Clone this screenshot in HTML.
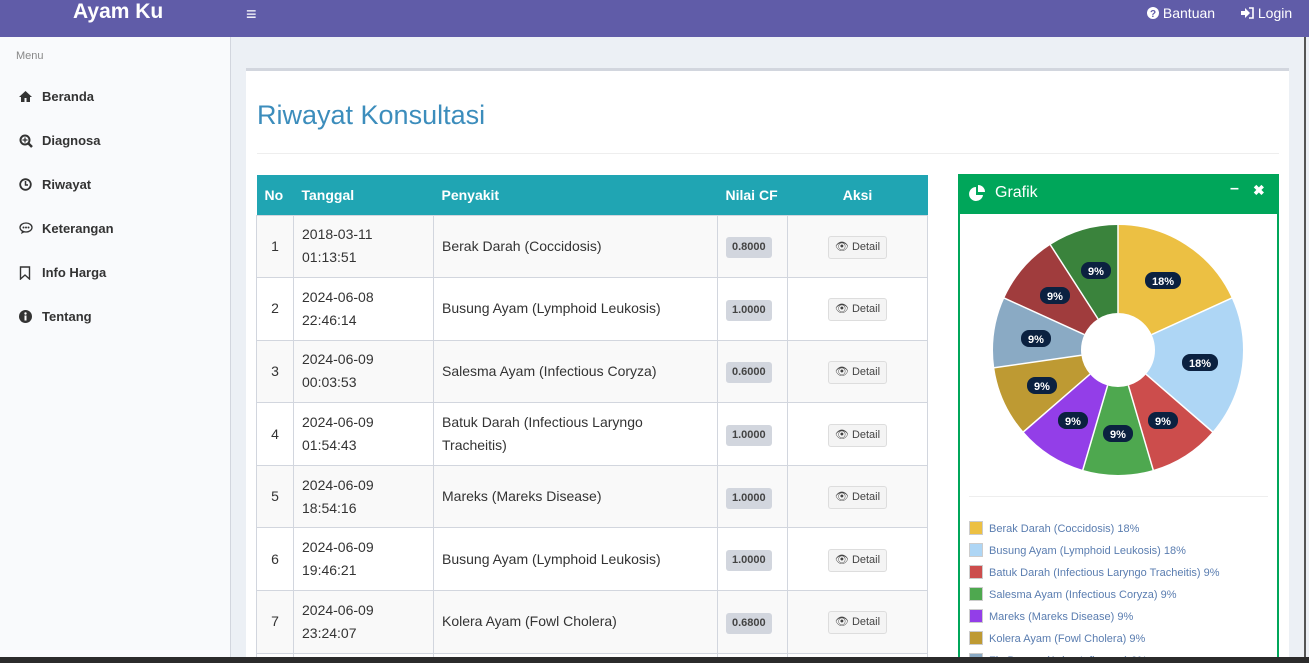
<!DOCTYPE html>
<html><head><meta charset="utf-8"><style>
*{box-sizing:border-box;margin:0;padding:0}
html,body{width:1309px;height:663px;overflow:hidden}
body{background:#ecf0f5;font-family:"Liberation Sans",sans-serif;color:#333;position:relative}
.nav{position:absolute;left:0;top:0;width:1309px;height:37px;background:#605ca8;color:#fff}
.logo{position:absolute;left:73px;top:0px;font-size:21px;font-weight:bold}
.burger{position:absolute;left:246px;top:4px;font-size:18px;font-weight:bold}
.nr{position:absolute;top:5px;font-size:14px}
.side{position:absolute;left:0;top:37px;width:231px;height:626px;background:#f9fafc;border-right:1px solid #d2d6de}
.side .m{position:absolute;left:16px;top:13px;font-size:11px;color:#888}
.side .it{position:absolute;left:19px;font-size:13px;font-weight:bold;color:#333}
.side .it svg{position:absolute;left:0;top:1px}
.side .it b{margin-left:23px}
.box{position:absolute;left:246px;top:68px;width:1043px;height:595px;background:#fff;border-top:3px solid #d2d6de}
h1{position:absolute;left:257px;top:100px;font-size:27px;font-weight:normal;color:#3c8dbc}
.hr{position:absolute;left:257px;top:153px;width:1022px;height:1px;background:#eee}
.tw{position:absolute;left:256px;top:175px;width:672px;height:482px;overflow:hidden}
table{border-collapse:collapse;width:672px;font-size:14px}
th{background:#20a5b3;color:#fff;height:40px;text-align:left;padding-left:8px;font-size:14px}
td{border:1px solid #d2d6de;height:62.6px;padding:0 8px;line-height:23px}
tr:nth-child(even) td{background:#f9f9f9}
.b{display:inline-block;background:#d2d6de;font-size:11px;font-weight:bold;padding:4px 6px;line-height:13px;border-radius:3px;color:#444}
.d{display:inline-block;border:1px solid #ddd;background:#f4f4f4;border-radius:3px;font-size:11px;padding:4px 6px;line-height:13px;color:#444}
.g{position:absolute;left:958px;top:174px;width:321px;height:489px;border:2px solid #00a65a;border-top:none;border-bottom:none;background:#fff;overflow:hidden}
.gh{position:absolute;left:958px;top:174px;width:321px;height:40px;background:#00a65a;color:#fff;font-size:16px;padding:10px 0 0 37px}
.lg{position:absolute;left:969px;font-size:11px;color:#5a7db0}
.lg span{display:inline-block;width:14px;height:14px;border:1px solid #ccc;vertical-align:-3px;margin-right:6px}
.lb{font:bold 11px "Liberation Sans",sans-serif;fill:#fff}
</style></head><body>
<div class="nav"><div class="logo">Ayam Ku</div><div class="burger">&#8801;</div>
<div class="nr" style="left:1147px"><svg width="12" height="12" viewBox="0 0 12 12" style="vertical-align:-1px"><circle cx="6" cy="6" r="6" fill="#fff"/><text x="6" y="10" text-anchor="middle" font-size="10" font-weight="bold" fill="#605ca8" font-family="Liberation Sans">?</text></svg> Bantuan</div>
<div class="nr" style="left:1241px"><svg width="13" height="12" viewBox="0 0 13 12" style="vertical-align:-1px"><path d="M0 4h4V1l5 5-5 5V8H0z" fill="#fff"/><path d="M8 1h4v10H8" fill="none" stroke="#fff" stroke-width="1.6"/></svg> Login</div></div>
<div class="side"><div class="m">Menu</div>
<div class="it" style="top:52px"><svg width="13" height="12"><path d="M6.5 1L0 7h2v5h3.5V8h2v4H11V7h2z" fill="#333"/></svg><b>Beranda</b></div>
<div class="it" style="top:96px"><svg width="14" height="14"><circle cx="6" cy="6" r="4.5" fill="none" stroke="#333" stroke-width="2"/><path d="M9 9l4 4" stroke="#333" stroke-width="2.5"/><path d="M6 3.5v5M3.5 6h5" stroke="#333" stroke-width="1.3"/></svg><b>Diagnosa</b></div>
<div class="it" style="top:140px"><svg width="13" height="13"><circle cx="6.5" cy="6.5" r="5.3" fill="none" stroke="#333" stroke-width="1.8"/><path d="M6.5 3v4H9" fill="none" stroke="#333" stroke-width="1.5"/></svg><b>Riwayat</b></div>
<div class="it" style="top:184px"><svg width="14" height="13"><ellipse cx="7" cy="5.5" rx="6" ry="4.5" fill="none" stroke="#333" stroke-width="1.3"/><path d="M3 9l-1 3 4-2" fill="#333"/><circle cx="4.5" cy="5.5" r="1" fill="#333"/><circle cx="7" cy="5.5" r="1" fill="#333"/><circle cx="9.5" cy="5.5" r="1" fill="#333"/></svg><b>Keterangan</b></div>
<div class="it" style="top:228px"><svg width="12" height="14"><path d="M1.5 1h9v12l-4.5-4-4.5 4z" fill="none" stroke="#333" stroke-width="1.4"/></svg><b>Info Harga</b></div>
<div class="it" style="top:272px"><svg width="13" height="13"><circle cx="6.5" cy="6.5" r="6.5" fill="#333"/><rect x="5.5" y="5.5" width="2" height="5" fill="#fff"/><circle cx="6.5" cy="3.5" r="1.2" fill="#fff"/></svg><b>Tentang</b></div></div>
<div class="box"></div>
<h1>Riwayat Konsultasi</h1><div class="hr"></div>
<div class="tw"><table>
<tr><th style="width:37px">No</th><th style="width:140px">Tanggal</th><th style="width:284px">Penyakit</th><th style="width:70px">Nilai CF</th><th style="text-align:center;padding:0">Aksi</th></tr>
<tr><td style="text-align:center">1</td><td>2018-03-11<br>01:13:51</td><td>Berak Darah (Coccidosis)</td><td><span class="b">0.8000</span></td><td style="text-align:center"><span class="d">&#128065;&#xFE0E; Detail</span></td></tr>
<tr><td style="text-align:center">2</td><td>2024-06-08<br>22:46:14</td><td>Busung Ayam (Lymphoid Leukosis)</td><td><span class="b">1.0000</span></td><td style="text-align:center"><span class="d">&#128065;&#xFE0E; Detail</span></td></tr>
<tr><td style="text-align:center">3</td><td>2024-06-09<br>00:03:53</td><td>Salesma Ayam (Infectious Coryza)</td><td><span class="b">0.6000</span></td><td style="text-align:center"><span class="d">&#128065;&#xFE0E; Detail</span></td></tr>
<tr><td style="text-align:center">4</td><td>2024-06-09<br>01:54:43</td><td>Batuk Darah (Infectious Laryngo Tracheitis)</td><td><span class="b">1.0000</span></td><td style="text-align:center"><span class="d">&#128065;&#xFE0E; Detail</span></td></tr>
<tr><td style="text-align:center">5</td><td>2024-06-09<br>18:54:16</td><td>Mareks (Mareks Disease)</td><td><span class="b">1.0000</span></td><td style="text-align:center"><span class="d">&#128065;&#xFE0E; Detail</span></td></tr>
<tr><td style="text-align:center">6</td><td>2024-06-09<br>19:46:21</td><td>Busung Ayam (Lymphoid Leukosis)</td><td><span class="b">1.0000</span></td><td style="text-align:center"><span class="d">&#128065;&#xFE0E; Detail</span></td></tr>
<tr><td style="text-align:center">7</td><td>2024-06-09<br>23:24:07</td><td>Kolera Ayam (Fowl Cholera)</td><td><span class="b">0.6800</span></td><td style="text-align:center"><span class="d">&#128065;&#xFE0E; Detail</span></td></tr>
<tr><td></td><td></td><td></td><td></td><td></td></tr>
</table></div>
<div class="g"></div>
<div class="gh">Grafik<svg style="position:absolute;left:10px;top:11px" width="18" height="18" viewBox="0 0 18 18"><path d="M8 2A7 7 0 1 0 15 10H8z" fill="#fff"/><path d="M10 0A7 7 0 0 1 17 7H10z" fill="#fff"/></svg><span style="position:absolute;left:272px;top:6px;font-weight:bold">&#8211;</span><span style="position:absolute;left:295px;top:8px;font-size:14px;font-weight:bold">&#10006;</span></div>
<svg style="position:absolute;left:993px;top:225px" width="250" height="250" viewBox="-125 -125 250 250">
<g transform="rotate(-90)" fill="none" stroke-width="88">
<circle r="81" stroke="#ecc043" stroke-dasharray="92.54 600" stroke-dashoffset="0"/>
<circle r="81" stroke="#aed6f5" stroke-dasharray="92.54 600" stroke-dashoffset="-92.54"/>
<circle r="81" stroke="#cc4d4c" stroke-dasharray="46.27 600" stroke-dashoffset="-185.08"/>
<circle r="81" stroke="#4ea84f" stroke-dasharray="46.27 600" stroke-dashoffset="-231.35"/>
<circle r="81" stroke="#933ee8" stroke-dasharray="46.27 600" stroke-dashoffset="-277.62"/>
<circle r="81" stroke="#be9a33" stroke-dasharray="46.27 600" stroke-dashoffset="-323.89"/>
<circle r="81" stroke="#8aaac4" stroke-dasharray="46.27 600" stroke-dashoffset="-370.16"/>
<circle r="81" stroke="#a03c3d" stroke-dasharray="46.27 600" stroke-dashoffset="-416.43"/>
<circle r="81" stroke="#3a833c" stroke-dasharray="46.2 600" stroke-dashoffset="-462.7"/>
</g>
<g stroke="#fff" stroke-width="1.5">
<line x1="0" y1="-37" x2="0" y2="-126"/>
<line x1="33.7" y1="-15.4" x2="114.6" y2="-52.3"/>
<line x1="28" y1="24.2" x2="95.3" y2="82.5"/>
<line x1="10.4" y1="35.5" x2="35.5" y2="121"/>
<line x1="-10.4" y1="35.5" x2="-35.5" y2="121"/>
<line x1="-28" y1="24.2" x2="-95.3" y2="82.5"/>
<line x1="-36.6" y1="5.3" x2="-124.7" y2="17.9"/>
<line x1="-33.7" y1="-15.4" x2="-114.6" y2="-52.3"/>
<line x1="-20" y1="-31.1" x2="-68.2" y2="-106"/>
</g>
<g fill="#0b2140">
<rect x="27" y="-78" width="36" height="17" rx="8"/><rect x="64" y="4" width="36" height="17" rx="8"/>
<rect x="30" y="62" width="30" height="17" rx="8"/><rect x="-15" y="75" width="30" height="17" rx="8"/>
<rect x="-60" y="62" width="30" height="17" rx="8"/><rect x="-91" y="27" width="30" height="17" rx="8"/>
<rect x="-97" y="-20" width="30" height="17" rx="8"/><rect x="-78" y="-63" width="30" height="17" rx="8"/>
<rect x="-37" y="-88" width="30" height="17" rx="8"/></g>
<g text-anchor="middle">
<text x="45" y="-65" class="lb">18%</text><text x="82" y="17" class="lb">18%</text>
<text x="45" y="75" class="lb">9%</text><text x="0" y="88" class="lb">9%</text>
<text x="-45" y="75" class="lb">9%</text><text x="-76" y="40" class="lb">9%</text>
<text x="-82" y="-7" class="lb">9%</text><text x="-63" y="-50" class="lb">9%</text>
<text x="-22" y="-75" class="lb">9%</text></g>
</svg>
<div style="position:absolute;left:969px;top:496px;width:299px;height:1px;background:#eee"></div>
<div class="lg" style="top:521px"><span style="background:#ecc043"></span>Berak Darah (Coccidosis) 18%</div>
<div class="lg" style="top:543px"><span style="background:#aed6f5"></span>Busung Ayam (Lymphoid Leukosis) 18%</div>
<div class="lg" style="top:565px"><span style="background:#cc4d4c"></span>Batuk Darah (Infectious Laryngo Tracheitis) 9%</div>
<div class="lg" style="top:587px"><span style="background:#4ea84f"></span>Salesma Ayam (Infectious Coryza) 9%</div>
<div class="lg" style="top:609px"><span style="background:#933ee8"></span>Mareks (Mareks Disease) 9%</div>
<div class="lg" style="top:631px"><span style="background:#be9a33"></span>Kolera Ayam (Fowl Cholera) 9%</div>
<div class="lg" style="top:653px;height:4px;overflow:hidden"><span style="background:#8aaac4"></span>Flu Burung (Avian Influenza) 9%</div>
<div style="position:absolute;left:1304px;top:37px;width:2px;height:620px;background:#555"></div>
<div style="position:absolute;left:0;top:657px;width:1309px;height:6px;background:#2b2b2b"></div>
</body></html>
